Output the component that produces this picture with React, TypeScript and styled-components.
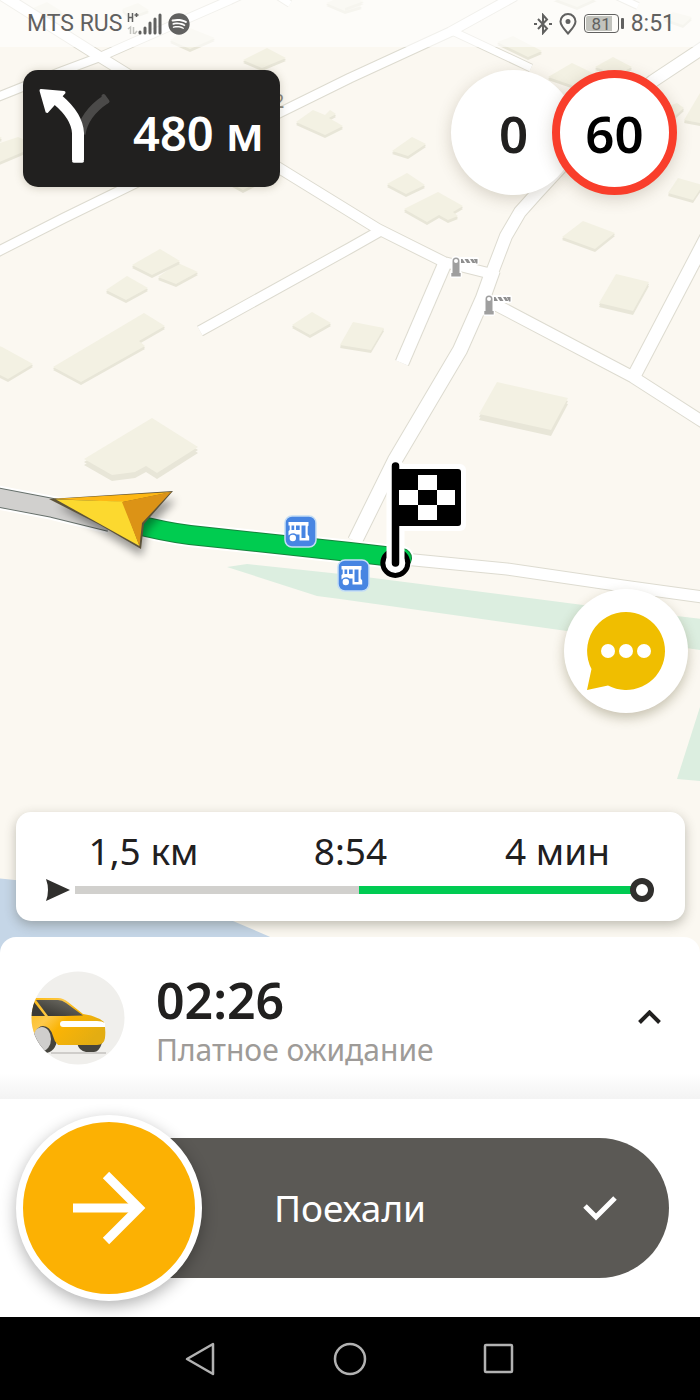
import React from "react";
import styled, { createGlobalStyle } from "styled-components";
import { FaSpotify } from "react-icons/fa";

const GlobalStyle = createGlobalStyle`
  *, *::before, *::after { box-sizing: border-box; }
  body { margin: 0; background: #fff; }
  button { font: inherit; color: inherit; border: 0; padding: 0; background: none; cursor: pointer; }
`;

const Screen = styled.div`
  display: flex;
  flex-direction: column;
  min-height: 100vh;
  font-family: "Noto Sans", "Open Sans", sans-serif;
  color: #21201f;
  overflow: hidden;
`;

/* ---------- map ---------- */

const Stage = styled.main`
  position: relative;
  flex: 1;
  display: flex;
  flex-direction: column;
  min-height: 700px;
`;

const MapCanvas = styled.svg`
  position: absolute;
  top: 0;
  left: 0;
  width: 100%;
  height: calc(100% + 23px);
  background: #fbf8f1;
`;

type Pt = [number, number];
const poly = (pts: Pt[], dy = 0) => pts.map(([x, y]) => `${x},${y + dy}`).join(" ");

const buildings: { pts: Pt[]; depth?: number }[] = [
  { pts: [[33, 8], [47, 2], [63, 12], [50, 17]] },
  { pts: [[122, 9], [138, 3], [149, 10], [130, 17]] },
  { pts: [[170, 40], [190, 28], [215, 38], [190, 49]] },
  { pts: [[243, 60], [267, 48], [286, 58], [262, 68]] },
  { pts: [[326, 3], [343, -4], [362, 6], [345, 11]] },
  { pts: [[296, 122], [313, 110], [325, 115], [330, 110], [336, 114], [329, 118], [343, 126], [325, 135]] },
  { pts: [[-5, 145], [0, 143], [18, 137], [30, 142], [30, 149], [-5, 164]] },
  { pts: [[-5, 134], [2, 138], [-5, 141]] },
  { pts: [[225, 180], [243, 170], [262, 180], [243, 190]] },
  { pts: [[553, -2], [577, 7], [597, -2]] },
  { pts: [[345, -3], [364, 1], [345, 8]] },
  { pts: [[663, 18], [673, 12], [692, 17], [683, 25]] },
  { pts: [[497, 42], [513, 36], [542, 51], [528, 57]] },
  { pts: [[548, 77], [572, 63], [597, 75], [577, 87]] },
  { pts: [[595, 67], [613, 57], [632, 67], [617, 75]] },
  { pts: [[392, 151], [412, 137], [426, 144], [408, 156]] },
  { pts: [[387, 184], [407, 173], [425, 185], [406, 194]] },
  { pts: [[404, 209], [438, 192], [463, 206], [453, 212], [458, 216], [448, 220], [439, 215], [427, 222]] },
  { pts: [[668, 193], [678, 178], [703, 185], [693, 200]] },
  { pts: [[663, 108], [677, 103], [684, 108], [675, 116]] },
  { pts: [[684, 120], [700, 93], [710, 95], [710, 125]] },
  { pts: [[562, 237], [583, 221], [615, 233], [595, 249]] },
  { pts: [[599, 303], [616, 274], [649, 282], [633, 311]], depth: 4 },
  { pts: [[479, 414], [497, 382], [568, 398], [551, 430]], depth: 6 },
  { pts: [[158, 277], [178, 263], [198, 272], [176, 284]] },
  { pts: [[132, 265], [160, 249], [180, 261], [152, 275]] },
  { pts: [[106, 290], [127, 276], [148, 288], [126, 300]] },
  { pts: [[53, 367], [144, 313], [165, 326], [139, 341], [145, 346], [81, 382]] },
  { pts: [[-10, 343], [2, 347], [33, 364], [8, 379], [-10, 370]] },
  { pts: [[292, 325], [312, 312], [331, 323], [310, 335]] },
  { pts: [[340, 345], [353, 322], [384, 328], [371, 350]] },
  { pts: [[84, 459], [152, 418], [198, 447], [157, 473], [146, 466], [135, 472], [112, 475]], depth: 6 },
];

const roads: { d: string; w: number }[] = [
  { d: "M0 -6 L100 57 L279 168 L378 229 L444 262 L488 273", w: 10 },
  { d: "M-5 98 L60 72 L100 57 L134 42 L230 0 L245 -7", w: 8 },
  { d: "M-5 253 L64 218 L279 113 L350 78 L450 32 L515 -4", w: 9 },
  { d: "M450 30 L531 68", w: 7 },
  { d: "M715 40 L653 81 L600 125 L537 193 L520 212 L506 236 L493 270 L482 300", w: 12 },
  { d: "M493 270 L483 298 L460 350 L395 460 L355 541", w: 14 },
  { d: "M380 231 L350 248 L200 331", w: 10 },
  { d: "M445 263 L402 363", w: 13 },
  { d: "M486 300 L500 307 L633 377 L700 420 L715 430", w: 11 },
  { d: "M634 376 L700 250 L722 208", w: 13 },
  { d: "M404 559 L507 569 L623 586 L710 598", w: 11 },
  { d: "M262 -14 L290 4", w: 6 },
  { d: "M612 -6 L638 6", w: 6 },
];

const Barrier = ({ x, y }: { x: number; y: number }) => (
  <g transform={`translate(${x} ${y})`}>
    <path
      d="M-3 6 V-6 A3 3 0 0 1 3 -6 V6 H4 V9 H-4 V6 Z M5 -8 H21 V-4 H5 Z"
      fill="#fff"
      stroke="#fff"
      strokeWidth="4"
      strokeLinejoin="round"
    />
    <path d="M-3.500 6 V-6 A3.500 3.500 0 0 1 3.500 -6 V6 H4.700 V9.500 H-4.700 V6 Z" fill="#9f9f9f" />
    <circle cx="0" cy="-6" r="2" fill="#fff" />
    <path d="M5 -8 H6.500 L9 -4 H5 Z M8.500 -8 H12 L14.500 -4 H11 Z M14 -8 H17 L19.500 -4 H16.500 Z M17.800 -8 H21.500 V-3.500 H20 Z" fill="#8f8f8f" />
  </g>
);

const BusStop = ({ x, y }: { x: number; y: number }) => (
  <g transform={`translate(${x} ${y})`}>
    <rect x="-15.500" y="-15.500" width="31" height="31" rx="7" fill="#4785e2" stroke="#c3ddf5" strokeWidth="1.500" />
    <path
      fill="#fff"
      fillRule="evenodd"
      d="M-12 -9.500 H8 V-6 L7.200 -5 V3 L8.700 5 V9 H-1 V3 H-4 Q-8 0 -12 4 V-0.500 L-10.800 -1.500 V-6 H-12 Z
         M-9 -6 V-1.500 H-6.300 V-6 Z M-4.500 -6 V-1.500 H-0.800 V-6 Z M1 -6 V6.500 H5 V-6 Z"
    />
    <circle cx="-7.700" cy="6.500" r="3.200" fill="#fff" />
  </g>
);

const CityMap = () => (
  <MapCanvas viewBox="0 0 700 960" preserveAspectRatio="xMidYMid slice" role="img" aria-label="Карта маршрута">
    <defs>
      <filter id="soft" x="-30%" y="-30%" width="160%" height="160%">
        <feGaussianBlur stdDeviation="4" />
      </filter>
    </defs>
    <path d="M227 567 L247 564 L350 575 L583 605 L710 620 V652 L700 650 L567 631 L340 599 L317 596 Z" fill="#dceee0" />
    <path d="M710 680 L700 707 L677 779 L710 782 Z" fill="#dceee0" />
    <path d="M-5 878 L15 880 L120 895 Q180 904 233 921 L268 936 L330 965 H-5 Z" fill="#c5d6e7" />
    {buildings.map(({ pts, depth = 3 }, i) => (
      <g key={i}>
        <polygon points={poly(pts, depth)} fill="#e8e6d8" />
        <polygon points={poly(pts, depth / 2)} fill="#e8e6d8" />
        <polygon points={poly(pts)} fill="#f3f1e3" />
      </g>
    ))}
    <g fill="none" stroke="#dddbd0" strokeLinejoin="round">
      {roads.map(({ d, w }, i) => (
        <path key={i} d={d} strokeWidth={w + 2} />
      ))}
    </g>
    <g fill="none" stroke="#fff" strokeLinejoin="round">
      {roads.map(({ d, w }, i) => (
        <path key={i} d={d} strokeWidth={w} />
      ))}
    </g>
    <text x="273" y="108" fontSize="20" fill="#8d887b" fontFamily="Noto Sans">2</text>

    <g fill="none" strokeLinejoin="round">
      <path d="M-10 496 L53 508 L110 522" stroke="#fff" strokeWidth="24" />
      <path d="M-10 496 L53 508 L110 522" stroke="#66706b" strokeWidth="20" />
      <path d="M-10 496 L53 508 L110 522" stroke="#d1d0ce" strokeWidth="18" />
      <path d="M130 523 Q165 532 190 535 L350 552 L402 558" stroke="#fff" strokeWidth="24" strokeLinecap="round" />
      <path d="M130 523 Q165 532 190 535 L350 552 L402 558" stroke="#16843c" strokeWidth="20" strokeLinecap="round" />
      <path d="M130 523 Q165 532 190 535 L350 552 L402 558" stroke="#00cc50" strokeWidth="18" strokeLinecap="round" />
    </g>

    <path d="M58 506 L176 500 L147 530 L142 556 Z" fill="#000" opacity="0.38" filter="url(#soft)" />
    <path d="M49 499 L173 491 L144 524 L141 549 L100 525 Z" fill="#5d533a" />
    <path d="M53 499 L172 492 L123 502 Z" fill="#fdb714" />
    <path d="M56 499.500 L123 501.500 L139.500 546 Z" fill="#fcd92f" />
    <path d="M122 502 L171 492 L142 523 L139.500 546 Z" fill="#dc9316" />

    <Barrier x={456} y={267} />
    <Barrier x={489} y={305} />
    <BusStop x={300.5} y={531.5} />
    <BusStop x={353.5} y={575.5} />

    <circle cx="395.300" cy="563" r="12.500" fill="#fff" stroke="#000" strokeWidth="5" />
    <rect x="392" y="464" width="74" height="67" rx="6" fill="#fff" />
    <path d="M395.500 468 V563" stroke="#fff" strokeWidth="18" strokeLinecap="round" />
    <path d="M395.500 466 V563" stroke="#000" strokeWidth="7.500" strokeLinecap="round" />
    <rect x="395" y="469" width="66" height="57" rx="3" fill="#000" />
    <path d="M418 475 h19 v15 h-19 Z M399 490 h19 v15 h-19 Z M437 490 h18 v15 h-18 Z M418 505 h19 v15 h-19 Z" fill="#fff" />
  </MapCanvas>
);

/* ---------- status bar ---------- */

const StatusBar = styled.header`
  position: relative;
  display: flex;
  justify-content: space-between;
  align-items: center;
  height: 47px;
  padding: 0 25px 0 27px;
  background: rgba(255, 255, 255, 0.6);
  font-family: Roboto, sans-serif;
  font-size: 23px;
  line-height: 28px;
  color: #616160;
`;

const StatusGroup = styled.div<{ $gap: number }>`
  display: flex;
  align-items: center;
  gap: ${(p) => p.$gap}px;
`;

const SignalIcon = () => (
  <svg width="36" height="24" viewBox="0 0 36 24" aria-hidden="true">
    <path d="M1.500 1 V10 M5.500 1 V10 M1.500 5.500 H5.500 M9.500 1 V5 M7.500 3 H11.500" fill="none" stroke="#616160" strokeWidth="1.500" />
    <path d="M3.500 22 V15 L1 17 M6.500 15 V22 M7.500 22 L10 19" fill="none" stroke="#c4c4c0" strokeWidth="1.500" />
    <path d="M13 21 V20 M18 21 V16 M23 21 V11 M28 21 V7 M33 21 V3" fill="none" stroke="#616160" strokeWidth="3" strokeLinecap="round" />
  </svg>
);

const BluetoothIcon = () => (
  <svg width="18" height="22" viewBox="0 0 18 22" fill="none" stroke="#616160" strokeWidth="2" aria-hidden="true">
    <path d="M4 6 L13 15.500 L9 20 V2 L13 6.500 L4 16" />
    <path d="M0 11 H3 M15 11 H18" />
  </svg>
);

const PinIcon = () => (
  <svg width="18" height="22" viewBox="0 0 18 22" fill="none" stroke="#616160" strokeWidth="2" aria-hidden="true">
    <path d="M9 20.500 C5 16 1.500 12.500 1.500 8.500 A7.500 7.500 0 0 1 16.500 8.500 C16.500 12.500 13 16 9 20.500 Z" />
    <circle cx="9" cy="8.500" r="1.500" fill="#616160" />
  </svg>
);

const Battery = styled.span`
  display: flex;
  align-items: center;
  gap: 2px;
  &::after {
    content: "";
    width: 3px;
    height: 11px;
    border-radius: 1px;
    background: #616160;
  }
`;

const BatteryCell = styled.span`
  width: 35px;
  height: 19px;
  border: 1px solid #616160;
  border-radius: 4px;
  padding: 1px;
  display: flex;
`;

const BatteryLevel = styled.span`
  flex: 1;
  border-radius: 2px;
  background: linear-gradient(90deg, #c2c3bd 85%, transparent 85%);
  font-size: 17px;
  line-height: 16px;
  text-align: center;
`;

/* ---------- map overlays ---------- */

const TopRow = styled.div`
  position: relative;
  display: flex;
  justify-content: space-between;
  align-items: flex-start;
  padding: 23px;
`;

const TurnCard = styled.section`
  display: flex;
  align-items: center;
  gap: 20px;
  height: 117px;
  padding: 0 16px 0 15px;
  border-radius: 15px;
  background: #21201f;
  color: #fff;
  box-shadow: 0 1px 8px rgba(80, 70, 40, 0.25);
`;

const TurnDistance = styled.span`
  padding-top: 8px;
  font-size: 47px;
  line-height: 56px;
  font-weight: 600;
  white-space: nowrap;
`;

const TurnIcon = () => (
  <svg width="75" height="84" viewBox="0 0 75 84" fill="none" aria-hidden="true">
    <path d="M43 47 Q46 27 67.500 12.500" stroke="#4b4a49" strokeWidth="9" />
    <path d="M65.500 9 L69.500 14.500" stroke="#4b4a49" strokeWidth="4" strokeLinecap="round" />
    <path d="M40 73 V46 Q39 29 20 13" stroke="#fff" strokeWidth="12" />
    <path d="M35.800 74 H44.200" stroke="#fff" strokeWidth="3.600" strokeLinecap="round" />
    <path d="M3 3.500 L26 5.500 L9 24.500 Z" fill="#fff" stroke="#fff" strokeWidth="3" strokeLinejoin="round" />
  </svg>
);

const Speeds = styled.div`
  display: flex;
`;

const SpeedDial = styled.div<{ $limit?: boolean }>`
  display: grid;
  place-items: center;
  width: 125px;
  height: 125px;
  border-radius: 50%;
  border: ${(p) => (p.$limit ? "8px solid #f93e2b" : "0")};
  background: #fff;
  color: ${(p) => (p.$limit ? "#000" : "#21201f")};
  font-size: 51px;
  line-height: 64px;
  font-weight: 600;
  box-shadow: 0 4px 16px rgba(80, 70, 40, 0.22);
  & + & {
    margin-left: -24px;
  }
`;

const ChatButton = styled.button`
  position: relative;
  display: grid;
  place-items: center;
  width: 124px;
  height: 124px;
  margin: auto 12px 99px auto;
  border-radius: 50%;
  background: #fff;
  box-shadow: 0 5px 12px rgba(90, 80, 40, 0.32);
`;

const TripCard = styled.section`
  position: relative;
  margin: 0 15px 16px 16px;
  padding: 12px 24px 19px;
  border-radius: 15px;
  background: #fff;
  box-shadow: 0 4px 12px rgba(60, 55, 40, 0.32);
`;

const TripFacts = styled.div`
  display: grid;
  grid-template-columns: repeat(3, 1fr);
  text-align: center;
  font-size: 37px;
  line-height: 54px;
`;

const TripBar = styled.div`
  display: flex;
  align-items: center;
  height: 24px;
  padding: 0 7px 0 6px;
`;

const TripTrack = styled.div`
  flex: 1;
  height: 8px;
  margin: 0 -1px 0 5px;
  background: #d1d0cd;
`;

const TripRemaining = styled.div`
  height: 100%;
  margin-left: auto;
  background: #00cb52;
`;

const TripEnd = styled.span`
  width: 24px;
  height: 24px;
  border: 6px solid #302f2d;
  border-radius: 50%;
  background: #fff;
`;

/* ---------- bottom sheet ---------- */

const WaitPanel = styled.section`
  position: relative;
  display: flex;
  align-items: center;
  height: 162px;
  padding: 0 39px 0 31px;
  border-radius: 16px 16px 0 0;
  background: linear-gradient(#fff 84%, #f3f3f3);
`;

const WaitText = styled.div`
  flex: 1;
  margin-left: 31px;
  padding-top: 3px;
`;

const WaitTime = styled.h1`
  margin: 0;
  font-size: 50px;
  line-height: 60px;
  font-weight: 600;
`;

const WaitLabel = styled.p`
  margin: 0;
  font-size: 30px;
  line-height: 40px;
  color: #9e9b98;
`;

const IconButton = styled.button`
  display: grid;
  place-items: center;
`;

const CarAvatar = () => (
  <svg width="94" height="94" viewBox="0 0 94 94" aria-hidden="true">
    <defs>
      <clipPath id="avatar"><circle cx="47" cy="47" r="46.500" /></clipPath>
      <linearGradient id="body" x1="0" y1="0" x2="1" y2="0.600">
        <stop offset="0" stopColor="#fbb810" />
        <stop offset="0.350" stopColor="#fdc94a" />
        <stop offset="0.550" stopColor="#fbb405" />
        <stop offset="1" stopColor="#e3ad12" />
      </linearGradient>
      <linearGradient id="glass" x1="0" y1="1" x2="1" y2="0">
        <stop offset="0" stopColor="#2f2e2a" />
        <stop offset="1" stopColor="#77756c" />
      </linearGradient>
    </defs>
    <g clipPath="url(#avatar)">
      <rect width="94" height="94" fill="#f0efec" />
      <path d="M20 82 H75" stroke="#cfcdca" strokeWidth="2" />
      <path d="M46 72 H71 Q68 81 63 81 H55 Q48 80 46 72 Z" fill="#45443d" />
      <ellipse cx="14" cy="68" rx="12" ry="14" fill="#45443d" />
      <path d="M0 27 H27 Q32 27 37 31 L52 43 Q66 45 73 51 Q75 58 74 67 Q73 74 66 74 H27 Q23 70 22 65 Q19 55 12 55 Q6 55 3 64 L0 60 Z" fill="url(#body)" />
      <path d="M5 29 H27 Q31 29 35 32 L52 44.500 Q32 45 17 45 Z" fill="url(#glass)" />
      <path d="M-1 45 L3 31 L14 45 Z" fill="#3c3b36" />
      <ellipse cx="11" cy="68" rx="9" ry="12" fill="#cfcecc" />
      <path d="M32 50 H66 Q71 50 74 52 V56 H32 Q29 56 29 53 Q29 50 32 50 Z" fill="#fff" />
    </g>
  </svg>
);

const ActionArea = styled.div`
  padding: 39px 31px;
  background: #fff;
`;

const SlideButton = styled.button`
  display: grid;
  grid-template-columns: 1fr auto 1fr;
  align-items: center;
  width: 100%;
  height: 140px;
  border-radius: 70px;
  background: #5b5955;
  color: #fff;
  font-size: 37px;
  line-height: 52px;
`;

const Knob = styled.span`
  display: grid;
  place-items: center;
  width: 186px;
  height: 186px;
  margin: -23px 0 -23px -15px;
  border: 7px solid #fff;
  border-radius: 50%;
  background: #fcb103;
  box-shadow: 0 5px 16px rgba(0, 0, 0, 0.3);
`;

const SlideCheck = styled.span`
  display: flex;
  justify-content: flex-end;
  padding-right: 52px;
`;

const NavBar = styled.nav`
  display: flex;
  justify-content: center;
  align-items: center;
  gap: 101px;
  height: 83px;
  background: #000;
`;

const NavButton = styled.button`
  display: grid;
  place-items: center;
  width: 48px;
  height: 48px;
`;

export default function App() {
  return (
    <>
      <GlobalStyle />
      <Screen>
        <Stage>
          <CityMap />
          <StatusBar>
            <StatusGroup $gap={5}>
              <span>MTS RUS</span>
              <SignalIcon />
              <FaSpotify size={22} />
            </StatusGroup>
            <StatusGroup $gap={7}>
              <BluetoothIcon />
              <PinIcon />
              <Battery>
                <BatteryCell>
                  <BatteryLevel>81</BatteryLevel>
                </BatteryCell>
              </Battery>
              <span>8:51</span>
            </StatusGroup>
          </StatusBar>
          <TopRow>
            <TurnCard>
              <TurnIcon />
              <TurnDistance>480 м</TurnDistance>
            </TurnCard>
            <Speeds>
              <SpeedDial>0</SpeedDial>
              <SpeedDial $limit>60</SpeedDial>
            </Speeds>
          </TopRow>
          <ChatButton type="button" aria-label="Чат">
            <svg width="80" height="80" viewBox="0 0 80 80" aria-hidden="true">
              <path d="M40 1 A39 39 0 1 1 22 74.600 L1 79 L5.500 58 A39 39 0 0 1 40 1 Z" fill="#f0be00" />
              <g fill="#fff">
                <circle cx="22" cy="40" r="7" />
                <circle cx="40" cy="40" r="7" />
                <circle cx="58" cy="40" r="7" />
              </g>
            </svg>
          </ChatButton>
          <TripCard>
            <TripFacts>
              <span>1,5 км</span>
              <span>8:54</span>
              <span>4 мин</span>
            </TripFacts>
            <TripBar>
              <svg width="24" height="22" viewBox="0 0 24 22" aria-hidden="true">
                <path d="M0 0 L24 11 L0 22 Q4 11 0 0 Z" fill="#302f2d" />
              </svg>
              <TripTrack>
                <TripRemaining style={{ width: "49%" }} />
              </TripTrack>
              <TripEnd />
            </TripBar>
          </TripCard>
        </Stage>
        <WaitPanel>
          <CarAvatar />
          <WaitText>
            <WaitTime>02:26</WaitTime>
            <WaitLabel>Платное ожидание</WaitLabel>
          </WaitText>
          <IconButton type="button" aria-label="Развернуть">
            <svg width="23" height="16" viewBox="0 0 23 16" fill="none" stroke="#21201f" strokeWidth="4" aria-hidden="true">
              <path d="M1.500 12.500 L11.500 2.500 L21.500 12.500" />
            </svg>
          </IconButton>
        </WaitPanel>
        <ActionArea>
          <SlideButton type="button">
            <Knob>
              <svg width="74" height="74" viewBox="0 0 74 74" fill="none" stroke="#fff" strokeWidth="9" aria-hidden="true">
                <path d="M1 37 H66" />
                <path d="M34 4 L67 37 L34 70" />
              </svg>
            </Knob>
            <span>Поехали</span>
            <SlideCheck>
              <svg width="34" height="26" viewBox="0 0 34 26" fill="none" stroke="#fff" strokeWidth="5" aria-hidden="true">
                <path d="M2 11 L13 22 L32 3" />
              </svg>
            </SlideCheck>
          </SlideButton>
        </ActionArea>
        <NavBar>
          <NavButton type="button" aria-label="Назад">
            <svg width="32" height="34" viewBox="0 0 32 34" fill="none" stroke="#b2b2b2" strokeWidth="2.500" strokeLinejoin="round" aria-hidden="true">
              <path d="M28 2 V32 L2 17 Z" />
            </svg>
          </NavButton>
          <NavButton type="button" aria-label="Домой">
            <svg width="34" height="34" viewBox="0 0 34 34" fill="none" stroke="#b2b2b2" strokeWidth="2.500" aria-hidden="true">
              <circle cx="17" cy="17" r="15" />
            </svg>
          </NavButton>
          <NavButton type="button" aria-label="Недавние">
            <svg width="34" height="34" viewBox="0 0 34 34" fill="none" stroke="#b2b2b2" strokeWidth="2.500" aria-hidden="true">
              <rect x="3" y="3" width="27" height="27" rx="1" />
            </svg>
          </NavButton>
        </NavBar>
      </Screen>
    </>
  );
}
